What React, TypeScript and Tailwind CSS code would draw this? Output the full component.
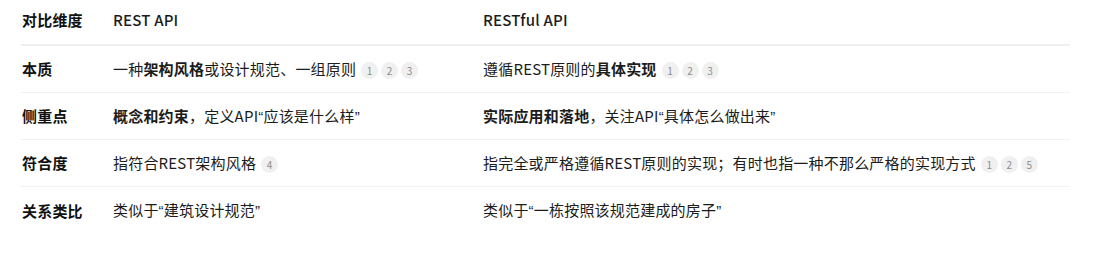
import React from "react";

const Badges = ({ items }: { items: string[] }) => (
  <span className="inline-flex items-center ml-[5px] align-middle">
    {items.map((n) => (
      <span key={n} className="inline-flex h-[17px] w-[17px] items-center justify-center rounded-full bg-[#f0f0f0] text-[10px] leading-none text-[#8c8c8c] mr-[3px]">
        {n}
      </span>
    ))}
  </span>
);

const Q = ({ c }: { c: string }) => <span className="font-['Liberation_Sans']">{c}</span>;

const Row = ({ label, a, b, last }: { label: string; a: React.ReactNode; b: React.ReactNode; last?: boolean }) => (
  <div className={`grid grid-cols-[92px_370px_1fr] h-[47px] items-center ${last ? "" : "border-b border-[#f2f2f2]"}`}>
    <div className="pl-[1px] font-bold text-[#111]">{label}</div>
    <div className="flex items-center">{a}</div>
    <div className="flex items-center">{b}</div>
  </div>
);

export default function App() {
  return (
    <div
      className="w-[1107px] h-[264px] bg-white text-[15px] leading-[24px] text-[#1c1c1c] tracking-[0.2px]"
      style={{ fontFamily: '"Noto Sans CJK SC", "Noto Sans", sans-serif' }}
    >
      <div className="ml-[21px] w-[1049px]">
        <div className="grid grid-cols-[92px_370px_1fr] h-[46px] pt-[8px] border-b-2 border-[#efefef]">
          <div className="pl-[1px] font-bold text-[#111]">对比维度</div>
          <div className="font-medium">REST API</div>
          <div className="font-medium">RESTful API</div>
        </div>
        <Row
          label="本质"
          a={<span>一种<b className="font-bold">架构风格</b>或设计规范、一组原则<Badges items={["1", "2", "3"]} /></span>}
          b={<span>遵循REST原则的<b className="font-bold">具体实现</b><Badges items={["1", "2", "3"]} /></span>}
        />
        <Row
          label="侧重点"
          a={<span><b className="font-bold">概念和约束</b>，定义API<Q c="“" />应该是什么样<Q c="”" /></span>}
          b={<span><b className="font-bold">实际应用和落地</b>，关注API<Q c="“" />具体怎么做出来<Q c="”" /></span>}
        />
        <Row
          label="符合度"
          a={<span>指符合REST架构风格<Badges items={["4"]} /></span>}
          b={<span>指完全或严格遵循REST原则的实现；有时也指一种不那么严格的实现方式<Badges items={["1", "2", "5"]} /></span>}
        />
        <Row
          label="关系类比"
          last
          a={<span>类似于<Q c="“" />建筑设计规范<Q c="”" /></span>}
          b={<span>类似于<Q c="“" />一栋按照该规范建成的房子<Q c="”" /></span>}
        />
      </div>
    </div>
  );
}
